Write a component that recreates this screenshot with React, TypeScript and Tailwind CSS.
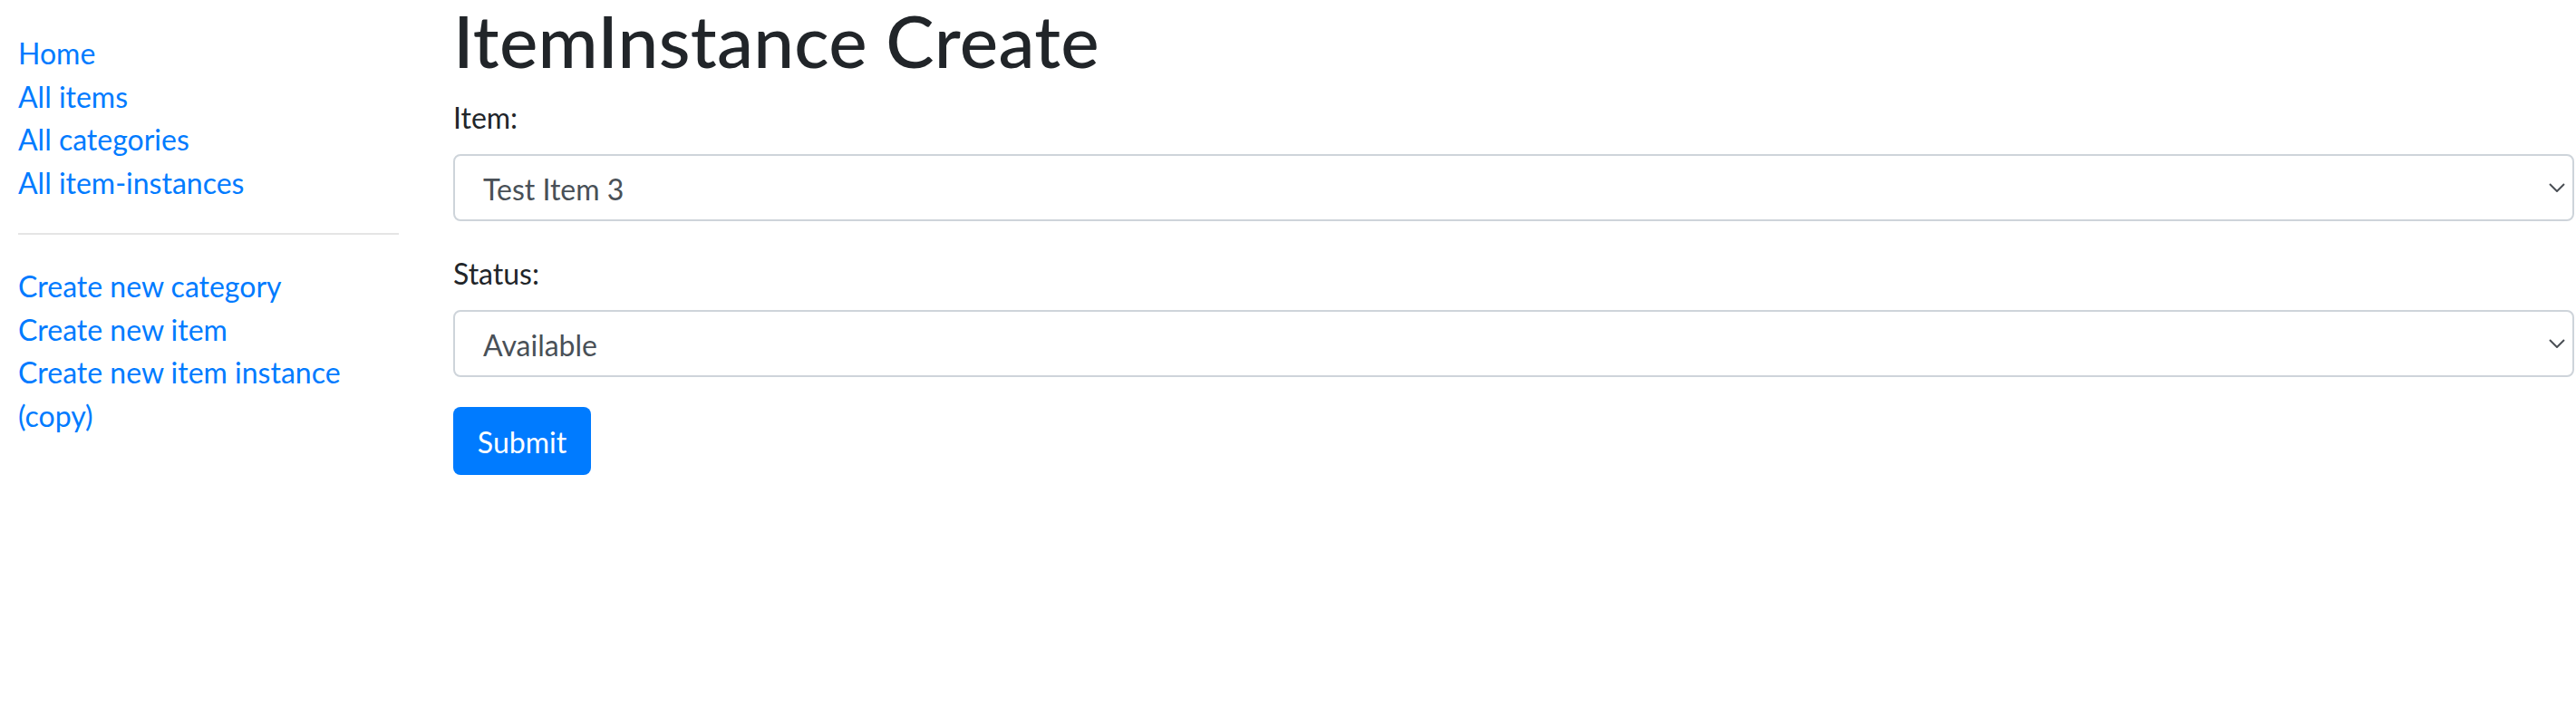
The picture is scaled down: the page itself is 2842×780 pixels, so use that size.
function Chevron() {
  return (
    <svg width="18" height="10" viewBox="0 0 18 10" fill="none" className="absolute right-[8px] top-1/2 -translate-y-1/2">
      <path d="M1 1l8 8 8-8" stroke="#4a4f55" strokeWidth="2" />
    </svg>
  );
}

function FakeSelect({ value }: { value: string }) {
  return (
    <div className="relative flex h-[74px] items-center rounded-[8px] border-2 border-[#ced4da] pl-[31px] pt-[3px] text-[32px] leading-[48px] text-[#495057]">
      {value}
      <Chevron />
    </div>
  );
}

export default function App() {
  return (
    <div className="flex min-h-[780px] bg-white font-['Lato',sans-serif]">
      {/* Sidebar */}
      <aside className="w-[500px] shrink-0 pl-[20px] pr-[60px] text-[32px] leading-[47.5px] text-[#007bff]">
        <ul className="mt-[35px]">
          <li><a href="#">Home</a></li>
          <li><a href="#">All items</a></li>
          <li><a href="#">All categories</a></li>
          <li><a href="#">All item-instances</a></li>
        </ul>
        <hr className="mt-[32px] border-t-2 border-[#e5e5e5]" />
        <ul className="mt-[33px]">
          <li><a href="#">Create new category</a></li>
          <li><a href="#">Create new item</a></li>
          <li><a href="#">Create new item instance (copy)</a></li>
        </ul>
      </aside>

      {/* Main form */}
      <main className="flex-1 pr-[2px] text-[#212529]">
        <h1 className="text-[80px] font-medium leading-[88px] tracking-[0.3px]">ItemInstance Create</h1>
        <form onSubmit={(e) => e.preventDefault()}>
          <label className="mt-[18px] block text-[32px] leading-[48px]">Item:</label>
          <div className="mt-[16px]">
            <FakeSelect value="Test Item 3" />
          </div>
          <label className="mt-[34px] block text-[32px] leading-[48px]">Status:</label>
          <div className="mt-[16px]">
            <FakeSelect value="Available" />
          </div>
          <button
            type="submit"
            className="mt-[33px] h-[75px] w-[152px] rounded-[8px] bg-[#007bff] pt-[2px] text-[32px] leading-[48px] text-white"
          >
            Submit
          </button>
        </form>
      </main>
    </div>
  );
}
